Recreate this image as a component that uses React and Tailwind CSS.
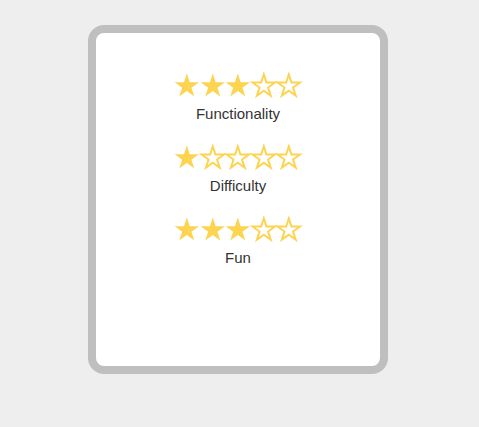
const STAR_POINTS =
  "13,0.2 15.92,9.18 25.36,9.18 17.73,14.74 20.64,23.72 13,18.17 5.36,23.72 8.27,14.74 0.64,9.18 10.08,9.18";

function Star({ filled }) {
  return (
    <svg viewBox="0 0 26 24" className="w-[25.6px] h-[24px] block overflow-visible">
      {filled ? (
        <polygon points={STAR_POINTS} fill="#fdd451" />
      ) : (
        <polygon
          points={STAR_POINTS}
          fill="#ffffff"
          stroke="#fdd451"
          strokeWidth="2.2"
          strokeLinejoin="miter"
          transform="translate(13 12.5) scale(0.92) translate(-13 -12.5)"
        />
      )}
    </svg>
  );
}

function Rating({ value, label }) {
  return (
    <div className="flex flex-col items-center">
      <div className="flex">
        {[1, 2, 3, 4, 5].map((i) => (
          <Star key={i} filled={i <= value} />
        ))}
      </div>
      <p className="mt-[8px] text-[15px] leading-[18px] text-[#333333]">
        {label}
      </p>
    </div>
  );
}

export default function App() {
  const ratings = [
    { label: "Functionality", value: 3 },
    { label: "Difficulty", value: 1 },
    { label: "Fun", value: 3 },
  ];

  return (
    <div className="w-full h-[427px] bg-[#eeeeee] pt-[25px] font-['Liberation_Sans',Arial,sans-serif]">
      <div className="ml-[88px] w-[300px] h-[349px] border-[8px] border-[#bfbfbf] rounded-[16px] bg-white">
        <div className="flex flex-col items-center gap-[22px] pt-[40px]">
          {ratings.map((r) => (
            <Rating key={r.label} value={r.value} label={r.label} />
          ))}
        </div>
      </div>
    </div>
  );
}
